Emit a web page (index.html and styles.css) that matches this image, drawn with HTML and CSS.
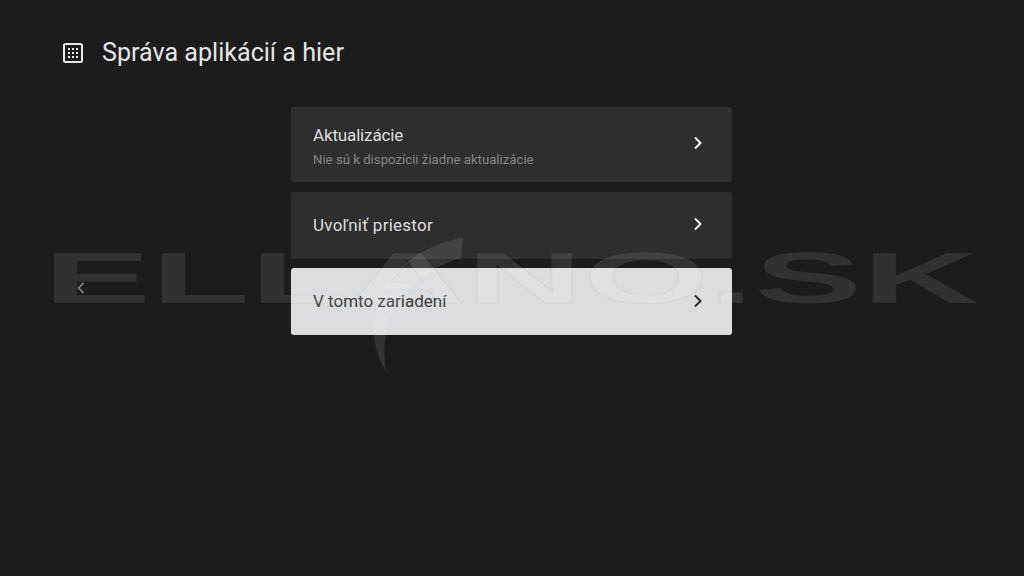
FILE: index.html
```html
<!DOCTYPE html>
<html lang="sk">
<head>
    <meta charset="UTF-8">
    <meta name="viewport" content="width=device-width, initial-scale=1.0">
    <title>Správa aplikácií a hier</title>
    <link rel="stylesheet" href="styles.css">
</head>
<body>
    <header class="page-header">
        <svg class="page-icon" width="20" height="20" viewBox="0 0 20 20">
            <rect x="1" y="1" width="18" height="18" rx="1.5" fill="none" stroke="#e8e8e8" stroke-width="2"/>
            <path d="M5 5h2v2H5zM9 5h2v2H9zM13 5h2v2h-2zM5 9h2v2H5zM9 9h2v2H9zM13 9h2v2h-2zM5 13h2v2H5zM9 13h2v2H9zM13 13h2v2h-2z" fill="#e8e8e8"/>
        </svg>
        <h1>Správa aplikácií a hier</h1>
    </header>

    <main class="content">
        <div class="back">
            <svg width="10" height="14" viewBox="0 0 10 14">
                <path d="M7.5 2 2.5 7l5 5" fill="none" stroke="#7a7a7a" stroke-width="1.8"/>
            </svg>
        </div>
        <div class="menu">
            <div class="menu-item tall">
                <div>
                    <div class="item-title tight">Aktualizácie</div>
                    <div class="item-sub">Nie sú k dispozícii žiadne aktualizácie</div>
                </div>
                <svg class="chevron" width="12" height="16" viewBox="0 0 12 16">
                    <path d="M3 2.5 8.5 8 3 13.5" fill="none" stroke="#f0f0f0" stroke-width="2"/>
                </svg>
            </div>
            <div class="menu-item">
                <div class="item-title wide">Uvoľniť priestor</div>
                <svg class="chevron" width="12" height="16" viewBox="0 0 12 16">
                    <path d="M3 2.5 8.5 8 3 13.5" fill="none" stroke="#f0f0f0" stroke-width="2"/>
                </svg>
            </div>
            <div class="menu-item selected">
                <div class="item-title">V tomto zariadení</div>
                <svg class="chevron" width="12" height="16" viewBox="0 0 12 16">
                    <path d="M3 2.5 8.5 8 3 13.5" fill="none" stroke="#2a2a2a" stroke-width="2"/>
                </svg>
            </div>
        </div>
    </main>

    <!-- watermark on top of the whole screen -->
    <div class="watermark">ELLANO.SK</div>
    <svg class="swoosh" width="100" height="140" viewBox="0 0 100 140">
        <path d="M92 2C50 8 8 40 3 80c-2 22 3 42 12 55c-3-20-2-42 6-58C32 54 55 32 90 22z" fill="#fff" fill-opacity="0.1"/>
    </svg>
</body>
</html>
```

FILE: styles.css
```css
html, body { margin: 0; height: 100%; }
body { background: #1c1c1c; color: #e8e8e8; font-family: Roboto, "Liberation Sans", sans-serif; overflow: hidden; position: relative; }

.page-header { display: flex; align-items: center; gap: 19px; padding: 37px 0 0 63px; height: 30px; }
.page-header h1 { margin: 0; font-size: 25.1px; font-weight: 400; color: #e6e6e6; white-space: nowrap; }
.page-icon { flex: none; margin-top: 1px; }

.content { display: flex; padding-top: 40px; }
.back { width: 215px; padding: 174px 0 0 76px; }
.back svg { display: block; }

.menu { width: 441px; display: flex; flex-direction: column; gap: 9px; }
.menu-item { height: 67px; box-sizing: border-box; padding: 0 28px 0 22px; display: flex; align-items: center; justify-content: space-between; background: #2e2e2e; border-radius: 3px; }
.menu-item.tall { height: 75px; margin-bottom: 1px; }
.menu-item.selected { background: #dcddde; color: #303030; }
.item-title { font-size: 17px; color: #dedede; margin-top: -2px; }
.item-title.tight { letter-spacing: -0.15px; margin-top: 0; }
.item-title.wide { letter-spacing: 0.25px; }
.selected .item-title { color: #3a3a3a; }
.item-sub { font-size: 13.2px; color: #858585; margin-top: 7px; margin-bottom: -3px; }
.chevron { flex: none; margin-top: -3px; }
.selected .chevron { margin-top: -1px; }

.watermark { position: absolute; left: 43px; top: 237px; font-family: "Liberation Sans", sans-serif; font-weight: 700; font-size: 72px; line-height: 83px; color: rgba(255, 255, 255, 0.095); -webkit-text-stroke: 1px rgba(0, 0, 0, 0.03); transform: scaleX(2.25); transform-origin: left top; white-space: nowrap; pointer-events: none; }
.swoosh { position: absolute; left: 371px; top: 236px; pointer-events: none; }
```
